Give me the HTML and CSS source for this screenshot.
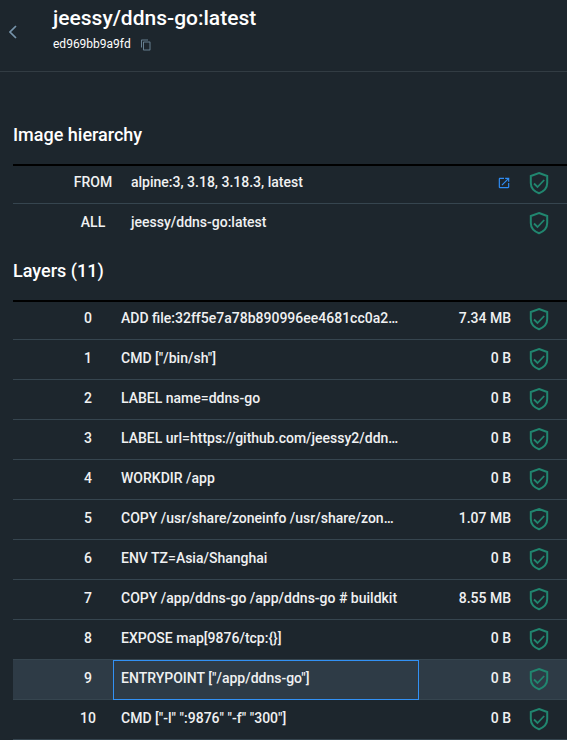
FILE: index.html
```html
<!DOCTYPE html>
<html lang="en">
<head>
<meta charset="utf-8">
<meta name="viewport" content="width=device-width, initial-scale=1">
<title>jeessy/ddns-go:latest</title>
<link rel="stylesheet" href="styles.css">
</head>
<body>
<svg class="symbols" aria-hidden="true">
  <symbol id="shield" viewBox="0 0 20 24">
    <path d="M10 2 L18.200 5 V12 C18.200 17 14.500 20.500 10 22.200 C5.500 20.500 1.800 17 1.800 12 V5 Z" fill="none" stroke="currentColor" stroke-width="2"/>
    <path d="M5 12.500 L8.500 16 L15.200 9" fill="none" stroke="currentColor" stroke-width="1.800"/>
  </symbol>
</svg>
<header class="header">
  <button class="back" type="button" aria-label="Back">
    <svg width="8" height="14" viewBox="0 0 8 14"><path d="M7 1 L1 7 L7 13" fill="none" stroke="currentColor" stroke-width="1.700"/></svg>
  </button>
  <div>
    <h1 class="title">jeessy/ddns-go:latest</h1>
    <div class="digest">
      <span>ed969bb9a9fd</span>
      <button class="copy" type="button" aria-label="Copy digest">
        <svg width="12" height="12" viewBox="0 0 24 24" fill="currentColor"><path d="M16 1H4C2.900 1 2 1.900 2 3v14h2V3h12V1zm3 4H8c-1.100 0-2 .9-2 2v14c0 1.100.9 2 2 2h11c1.100 0 2-.9 2-2V7c0-1.100-.9-2-2-2zm0 16H8V7h11v14z"/></svg>
      </button>
    </div>
  </div>
</header>
<main class="content">
  <section>
    <h2 class="heading">Image hierarchy</h2>
    <table class="grid hierarchy">
      <colgroup><col class="col-stage"><col><col class="col-open"><col class="col-status"></colgroup>
      <tbody>
        <tr><td class="index">FROM</td><td class="name">alpine:3, 3.18, 3.18.3, latest</td><td class="end"><a class="open" href="#" aria-label="Open image"><svg width="14" height="14" viewBox="0 0 24 24" fill="currentColor"><path d="M19 19H5V5h7V3H5c-1.110 0-2 .9-2 2v14c0 1.100.89 2 2 2h14c1.100 0 2-.9 2-2v-7h-2v7zM14 3v2h3.590l-9.830 9.830 1.410 1.410L19 6.410V10h2V3h-7z"/></svg></a></td><td class="status"><svg><use href="#shield"/></svg></td></tr>
        <tr><td class="index">ALL</td><td class="name">jeessy/ddns-go:latest</td><td></td><td class="status"><svg><use href="#shield"/></svg></td></tr>
      </tbody>
    </table>
  </section>
  <section>
    <h2 class="heading">Layers (11)</h2>
    <table class="grid">
      <colgroup><col class="col-index"><col><col class="col-size"><col class="col-status"></colgroup>
      <tbody>
        <tr><td class="index">0</td><td class="name">ADD file:32ff5e7a78b890996ee4681cc0a2…</td><td class="end">7.34 MB</td><td class="status"><svg><use href="#shield"/></svg></td></tr>
        <tr><td class="index">1</td><td class="name">CMD ["/bin/sh"]</td><td class="end">0 B</td><td class="status"><svg><use href="#shield"/></svg></td></tr>
        <tr><td class="index">2</td><td class="name">LABEL name=ddns-go</td><td class="end">0 B</td><td class="status"><svg><use href="#shield"/></svg></td></tr>
        <tr><td class="index">3</td><td class="name">LABEL url=https://github.com/jeessy2/ddn…</td><td class="end">0 B</td><td class="status"><svg><use href="#shield"/></svg></td></tr>
        <tr><td class="index">4</td><td class="name">WORKDIR /app</td><td class="end">0 B</td><td class="status"><svg><use href="#shield"/></svg></td></tr>
        <tr><td class="index">5</td><td class="name">COPY /usr/share/zoneinfo /usr/share/zon…</td><td class="end">1.07 MB</td><td class="status"><svg><use href="#shield"/></svg></td></tr>
        <tr><td class="index">6</td><td class="name">ENV TZ=Asia/Shanghai</td><td class="end">0 B</td><td class="status"><svg><use href="#shield"/></svg></td></tr>
        <tr><td class="index">7</td><td class="name">COPY /app/ddns-go /app/ddns-go # buildkit</td><td class="end">8.55 MB</td><td class="status"><svg><use href="#shield"/></svg></td></tr>
        <tr><td class="index">8</td><td class="name">EXPOSE map[9876/tcp:{}]</td><td class="end">0 B</td><td class="status"><svg><use href="#shield"/></svg></td></tr>
        <tr class="selected"><td class="index">9</td><td class="name">ENTRYPOINT ["/app/ddns-go"]</td><td class="end">0 B</td><td class="status"><svg><use href="#shield"/></svg></td></tr>
        <tr><td class="index">10</td><td class="name">CMD ["-l" ":9876" "-f" "300"]</td><td class="end">0 B</td><td class="status"><svg><use href="#shield"/></svg></td></tr>
      </tbody>
    </table>
  </section>
</main>
</body>
</html>
```
FILE: styles.css
```css
* {
  box-sizing: border-box;
}

body {
  margin: 0;
  background: #1d262d;
  color: #fff;
  font-family: Roboto, "Liberation Sans", sans-serif;
  font-size: 14px;
}

button {
  display: flex;
  padding: 0;
  border: 0;
  background: none;
  cursor: pointer;
}

.symbols {
  display: none;
}

.header {
  display: flex;
  align-items: flex-start;
  gap: 36px;
  padding: 4px 9px 14px;
  border-bottom: 1px solid #323c43;
}

.back {
  margin-top: 21px;
  color: #7794ab;
}

.title {
  margin: 0;
  font-size: 21px;
  font-weight: 500;
  line-height: 28px;
}

.digest {
  display: flex;
  align-items: center;
  gap: 9px;
  font-size: 12px;
  line-height: 25px;
}

.copy {
  color: #677f90;
}

.content {
  padding: 43px 0 0 13px;
}

.heading {
  margin: 0;
  padding: 6px 0 15px;
  font-size: 18px;
  font-weight: 500;
  line-height: 28px;
}

.hierarchy {
  margin-bottom: 7px;
}

.grid {
  width: 100%;
  table-layout: fixed;
  border-collapse: separate;
  border-spacing: 0;
}

.col-index {
  width: 100px;
}

.col-stage {
  width: 110px;
}

.col-open,
.col-size {
  width: 92px;
}

.col-status {
  width: 56px;
}

.grid td {
  height: 40px;
  padding: 0 0 4px;
  border-bottom: 1px solid #36454f;
  color: #f0f1f2;
  font-weight: 500;
  line-height: 20px;
  white-space: nowrap;
}

.grid tr:first-child td {
  box-shadow: inset 0 2px #000;
}

.hierarchy tr:last-child td {
  border-bottom-color: transparent;
}

.grid .index {
  padding-left: 50px;
  text-align: center;
}

.grid .name {
  padding-left: 8px;
  padding-right: 8px;
  overflow: hidden;
  text-overflow: ellipsis;
}

.end {
  text-align: right;
}

.open {
  display: inline-flex;
  vertical-align: middle;
  color: #2f8df5;
}

.grid .status {
  padding: 0 0 2px;
  color: #21866f;
}

.status svg {
  display: block;
  width: 20px;
  height: 24px;
  margin: 0 auto;
}

.selected td {
  background: #2e3b46;
}

.selected .name {
  outline: 1px solid #3291f5;
  outline-offset: -1px;
}
```
